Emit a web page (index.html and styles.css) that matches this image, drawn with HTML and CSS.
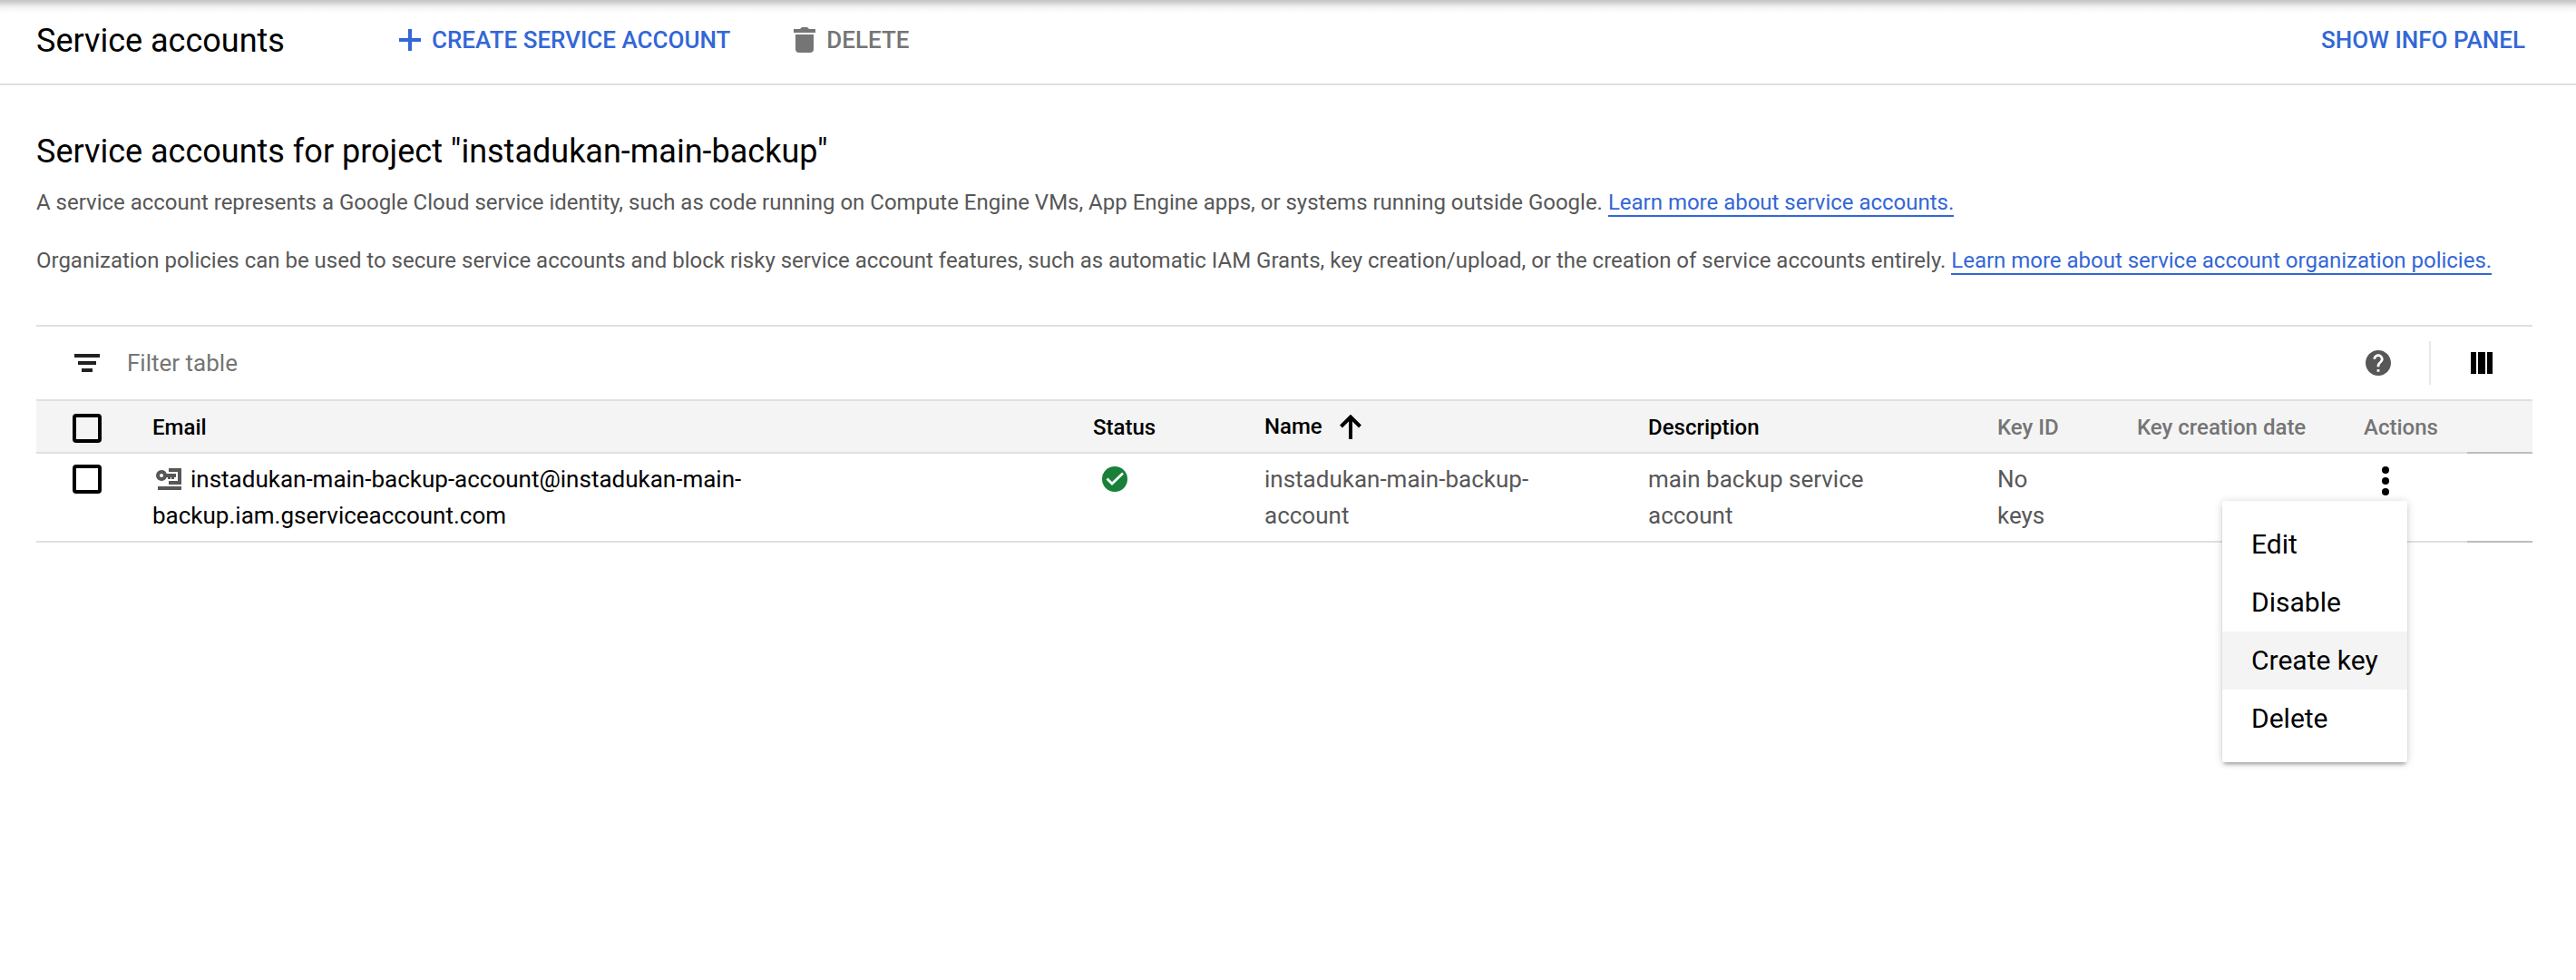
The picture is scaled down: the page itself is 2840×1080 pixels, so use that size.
FILE: index.html
```html
<!DOCTYPE html>
<html lang="en">
<head>
<meta charset="utf-8">
<title>Service accounts</title>
<link rel="stylesheet" href="styles.css">
</head>
<body>
<header class="toolbar">
  <h1 class="toolbar-title">Service accounts</h1>
  <button class="action action-create">
    <svg class="icon-plus" viewBox="0 0 24 24"><path d="M10 0h4v10h10v4H14v10h-4V14H0v-4h10z"/></svg>
    <span>CREATE SERVICE ACCOUNT</span>
  </button>
  <button class="action action-delete">
    <svg class="icon-trash" viewBox="0 0 24 28"><path d="M0 2h7l2-2h6l2 2h7v4H0zM2 8h20v16a4 4 0 0 1-4 4H6a4 4 0 0 1-4-4z"/></svg>
    <span>DELETE</span>
  </button>
  <button class="action action-info">SHOW INFO PANEL</button>
</header>
<main class="content">
  <h2 class="heading">Service accounts for project "instadukan-main-backup"</h2>
  <p class="intro">A service account represents a Google Cloud service identity, such as code running on Compute Engine VMs, App Engine apps, or systems running outside Google. <a class="link">Learn more about service accounts.</a></p>
  <p class="intro">Organization policies can be used to secure service accounts and block risky service account features, such as automatic IAM Grants, key creation/upload, or the creation of service accounts entirely. <a class="link">Learn more about service account organization policies.</a></p>
  <section class="table">
    <div class="filter">
      <svg class="icon-filter" viewBox="0 0 28 20"><path d="M0 0h28v4H0zM4 8h20v4H4zM8 16h12v4H8z"/></svg>
      <span class="filter-text">Filter table</span>
      <svg class="icon-help" viewBox="2 2 20 20"><path d="M12 2C6.48 2 2 6.48 2 12s4.48 10 10 10 10-4.48 10-10S17.52 2 12 2zm1 17h-2v-2h2v2zm2.07-7.75l-.9.92C13.45 12.9 13 13.5 13 15h-2v-.5c0-1.1.45-2.1 1.17-2.83l1.24-1.26c.37-.36.59-.86.59-1.41 0-1.1-.9-2-2-2s-2 .9-2 2H8c0-2.21 1.79-4 4-4s4 1.79 4 4c0 .88-.36 1.68-.93 2.25z"/></svg>
      <span class="divider"></span>
      <svg class="icon-columns" viewBox="0 0 24 24"><path d="M0 0h6v24H0zM8 0h8v24H8zM18 0h6v24h-6z"/></svg>
    </div>
    <div class="row row-head">
      <span class="cell"><span class="checkbox"></span></span>
      <span class="cell">Email</span>
      <span class="cell">Status</span>
      <span class="cell cell-sorted">Name <svg class="icon-sort" viewBox="0 0 24 27"><path d="M12 2V27M1.500 13L12 2.500 22.500 13"/></svg></span>
      <span class="cell">Description</span>
      <span class="cell muted">Key ID</span>
      <span class="cell muted">Key creation date</span>
      <span class="cell muted">Actions</span>
      <span class="cell cell-end"></span>
    </div>
    <div class="row row-body">
      <span class="cell"><span class="checkbox"></span></span>
      <span class="cell email"><svg class="icon-key" viewBox="0 0 28 24"><path fill-rule="evenodd" d="M14 0h14v18H14v-4h10V4H14zM2 20h26v4H2zM6 2a6 6 0 0 1 5.700 4H22v4h-2v2h-3v-2h-1v2h-3v-2h-1.300A6 6 0 1 1 6 2zm0 4a2 2 0 1 0 0 4 2 2 0 0 0 0-4z"/></svg>instadukan-main-backup-account@instadukan-main-<br>backup.iam.gserviceaccount.com</span>
      <span class="cell"><svg class="icon-check" viewBox="0 0 28 28"><circle cx="14" cy="14" r="14"/><path d="M5.500 13.500l5.500 5.500L23 7.500"/></svg></span>
      <span class="cell soft">instadukan-main-backup-<br>account</span>
      <span class="cell soft">main backup service<br>account</span>
      <span class="cell soft">No<br>keys</span>
      <span class="cell"></span>
      <span class="cell cell-actions">
        <svg class="icon-dots" viewBox="0 0 8 32"><circle cx="4" cy="4" r="4"/><circle cx="4" cy="16" r="4"/><circle cx="4" cy="28" r="4"/></svg>
        <span class="menu">
          <span class="menu-item">Edit</span>
          <span class="menu-item">Disable</span>
          <span class="menu-item menu-item-active">Create key</span>
          <span class="menu-item">Delete</span>
        </span>
      </span>
      <span class="cell cell-end"></span>
    </div>
  </section>
</main>
</body>
</html>
```
FILE: styles.css
```css
* { box-sizing: border-box; }
body {
  margin: 0;
  min-height: 1080px;
  background: #fff;
  color: #000;
  font-family: Roboto, "Liberation Sans", sans-serif;
}
svg { display: block; flex: none; }
.toolbar {
  display: flex;
  align-items: center;
  height: 94px;
  padding: 0 56px 4px 40px;
  border-bottom: 2px solid #e0e0e0;
  background: linear-gradient(#c4c4c4 0, #d4d4d4 3px, #eee 7px, #fafafa 11px, #fff 15px);
}
.toolbar-title {
  width: 400px;
  margin: 0;
  font-size: 36px;
  font-weight: 400;
  line-height: 48px;
  padding-top: 2px;
}
.action {
  display: flex;
  align-items: center;
  margin: 0;
  padding: 0;
  border: 0;
  background: none;
  color: #3367d6;
  fill: currentColor;
  font: 500 26px/32px Roboto, "Liberation Sans", sans-serif;
  white-space: nowrap;
}
.icon-plus { width: 24px; height: 24px; margin-right: 12px; }
.action-delete { margin-left: 70px; color: #757575; }
.icon-trash { width: 24px; height: 28px; margin-right: 12px; }
.action-info { margin-left: auto; }
.content { padding: 50px 48px 0 40px; }
.heading {
  margin: 0 0 13px;
  font-size: 36px;
  font-weight: 400;
  line-height: 46px;
}
.intro {
  margin: 0 0 24px;
  color: #575757;
  font-size: 24px;
  line-height: 40px;
  letter-spacing: -0.01px;
  white-space: nowrap;
}
.link { color: #3367d6; border-bottom: 2px solid #3367d6; }
.table { margin-top: 51px; border-top: 2px solid #e0e0e0; }
.filter {
  display: flex;
  align-items: center;
  height: 80px;
  padding: 0 44px 0 42px;
  color: #757575;
  font-size: 26px;
}
.icon-filter { width: 28px; height: 20px; fill: #212121; }
.filter-text { margin-left: 30px; }
.icon-help { width: 28px; height: 28px; margin-left: auto; fill: #575757; }
.divider { width: 2px; height: 48px; margin: 0 44px 0 42px; background: #e8e8e8; }
.icon-columns { width: 24px; height: 24px; }
.row {
  display: grid;
  grid-template-columns: 128px 1037px 189px 423px 385px 154px 250px 114px 72px;
}
.row-head {
  height: 60px;
  background: #f4f4f4;
  border-top: 2px solid #e0e0e0;
  font-size: 24px;
  font-weight: 500;
  line-height: 58px;
}
.row-body { height: 98px; font-size: 26px; line-height: 40px; }
.cell { border-bottom: 2px solid #e0e0e0; white-space: nowrap; }
.row-head .cell { height: 58px; }
.row-body .cell { padding-top: 8px; }
.cell-end, .row-body .cell-end { border-bottom-color: #bdbdbd; }
.muted { color: #757575; }
.soft { color: #575757; }
.checkbox {
  display: block;
  width: 32px;
  height: 32px;
  margin: 14px 0 0 40px;
  border: 4px solid #000;
  border-radius: 4px;
}
.row-body .checkbox { margin-top: 4px; }
.cell-sorted { display: flex; align-items: center; }
.icon-sort { width: 24px; height: 27px; margin-left: 19px; fill: none; stroke: #000; stroke-width: 4; }
.icon-key { display: inline-block; width: 28px; height: 24px; margin: 0 10px 0 4px; vertical-align: -3px; fill: #575757; }
.icon-check { width: 28px; height: 28px; margin: 6px 0 0 10px; fill: #188038; }
.icon-check path { fill: none; stroke: #fff; stroke-width: 2.800; }
.cell-actions { position: relative; }
.icon-dots { width: 8px; height: 32px; margin: 6px 0 0 20px; }
.menu {
  position: absolute;
  top: 52px;
  right: 66px;
  width: 204px;
  height: 288px;
  padding: 16px 0;
  background: #fff;
  border-radius: 2px;
  box-shadow: 0 4px 4px -2px rgba(0,0,0,.3), 0 1px 10px rgba(0,0,0,.18);
}
.menu-item {
  display: block;
  height: 64px;
  padding-left: 32px;
  font-size: 30px;
  line-height: 64px;
}
.menu-item-active { background: #f4f4f4; }
```
